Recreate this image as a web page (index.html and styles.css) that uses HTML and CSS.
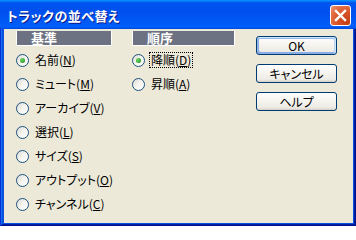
FILE: index.html
```html
<!DOCTYPE html>
<html lang="ja">
<head>
<meta charset="utf-8">
<title>トラックの並べ替え</title>
<link rel="stylesheet" href="styles.css">
</head>
<body>
<div class="window">
  <div class="titlebar">
    <span class="title">トラックの並べ替え</span>
    <span class="close">
      <svg width="13" height="13" viewBox="0 0 13 13"><path d="M2 2 L11 11 M11 2 L2 11" stroke="#fff" stroke-width="2.4" stroke-linecap="square" fill="none"/></svg>
    </span>
  </div>
  <div class="frame">
    <div class="client">
      <div class="group g1">
        <div class="ghead">基準</div>
        <div class="row"><span class="rb on"></span><span class="lbl">名前(<u>N</u>)</span></div>
        <div class="row"><span class="rb"></span><span class="lbl">ミュート(<u>M</u>)</span></div>
        <div class="row"><span class="rb"></span><span class="lbl">アーカイブ(<u>V</u>)</span></div>
        <div class="row"><span class="rb"></span><span class="lbl">選択(<u>L</u>)</span></div>
        <div class="row"><span class="rb"></span><span class="lbl">サイズ(<u>S</u>)</span></div>
        <div class="row"><span class="rb"></span><span class="lbl">アウトプット(<u>O</u>)</span></div>
        <div class="row"><span class="rb"></span><span class="lbl">チャンネル(<u>C</u>)</span></div>
      </div>
      <div class="group g2">
        <div class="ghead">順序</div>
        <div class="row"><span class="rb on"></span><span class="lbl focus">降順(<u>D</u>)</span></div>
        <div class="row"><span class="rb"></span><span class="lbl">昇順(<u>A</u>)</span></div>
      </div>
      <div class="buttons">
        <div class="btn default">OK</div>
        <div class="btn">キャンセル</div>
        <div class="btn">ヘルプ</div>
      </div>
    </div>
  </div>
</div>
</body>
</html>
```
FILE: styles.css
```css
html, body {
  margin: 0;
  padding: 0;
  background: #ffffff;
}
body {
  font-family: "Noto Sans CJK JP", "Noto Sans", sans-serif;
  font-feature-settings: "palt";
  font-size: 12px;
  color: #000;
}
.window {
  width: 356px;
  height: 226px;
  display: flex;
  flex-direction: column;
  background: #0055e5;
}
.titlebar {
  height: 29px;
  flex: none;
  display: flex;
  align-items: center;
  justify-content: space-between;
  padding: 0 5px 0 7px;
  box-sizing: border-box;
  background: linear-gradient(180deg, #0997ff 0%, #0053ee 10%, #0050ee 40%, #005cf8 85%, #0060fc 92%, #0058f0 95%, #0046dc 100%);
}
.title {
  color: #fff;
  font-weight: bold;
  font-size: 13px;
  letter-spacing: 0.5px;
  text-shadow: 1px 1px #0a1a8c;
  line-height: 1;
  margin-top: 1px;
}
.close {
  width: 21px;
  height: 21px;
  box-sizing: border-box;
  border: 1px solid #fff;
  border-radius: 3px;
  display: flex;
  align-items: center;
  justify-content: center;
  background: radial-gradient(circle at 85% 85%, #c33f16 0%, #d85428 45%, #e37048 75%, #f09a7c 100%);
  margin-top: 1px;
}
.close svg {
  display: block;
}
.frame {
  flex: 1;
  display: flex;
  padding: 0 3px 3px 4px;
  background: #0a4fe0;
  box-shadow: inset 1px 0 #0831d9, inset -1px -1px #00138c, inset 2px 0 #166aee, inset -2px -2px #001ea0, inset 3px 0 #0855dd;
}
.client {
  flex: 1;
  background: #ece9d8;
  display: flex;
  align-items: flex-start;
  padding: 2px 0 0 12px;
}
.group {
  display: flex;
  flex-direction: column;
}
.g1 {
  width: 96px;
}
.g2 {
  width: 103px;
  margin-left: 20px;
}
.ghead {
  height: 14px;
  background: #6d7282;
  border: 1px solid #ffffff;
  border-top: none;
  color: #fff;
  font-weight: bold;
  font-size: 13px;
  line-height: 14px;
  padding-left: 14px;
  margin-bottom: 2px;
}
.row {
  height: 24px;
  display: flex;
  align-items: center;
  white-space: nowrap;
}
.rb {
  width: 13px;
  height: 13px;
  box-sizing: border-box;
  border-radius: 50%;
  border: 1px solid #1c5180;
  background: linear-gradient(135deg, #dcdad3 0%, #f4f3ee 45%, #ffffff 100%);
  display: flex;
  align-items: center;
  justify-content: center;
  flex: none;
}
.rb.on::after {
  content: "";
  width: 5px;
  height: 5px;
  border-radius: 50%;
  background: radial-gradient(circle at 35% 35%, #6fd66b 0%, #3dac3a 55%, #1f8a1d 100%);
}
.lbl {
  margin-left: 4px;
  line-height: 14px;
  padding: 0 1px;
  border: 1px solid transparent;
}
.lbl.focus {
  border: 1px dotted #000;
}
.buttons {
  margin-left: 21px;
  margin-top: 5px;
  display: flex;
  flex-direction: column;
  gap: 9px;
}
.btn {
  width: 81px;
  height: 19px;
  box-sizing: border-box;
  border: 1px solid #003c74;
  border-radius: 3px;
  background: linear-gradient(180deg, #ffffff 0%, #f6f5f1 40%, #ecebe5 85%, #d6d0c5 100%);
  display: flex;
  align-items: center;
  justify-content: center;
  font-size: 12px;
  line-height: 1;
}
.btn.default {
  box-shadow: inset -1px 1px #cee7ff, inset 1px 2px #98b8ea, inset -2px 2px #bcd4f6, inset 1px -1px #89ade4, inset 2px -2px #89ade4;
}
```
